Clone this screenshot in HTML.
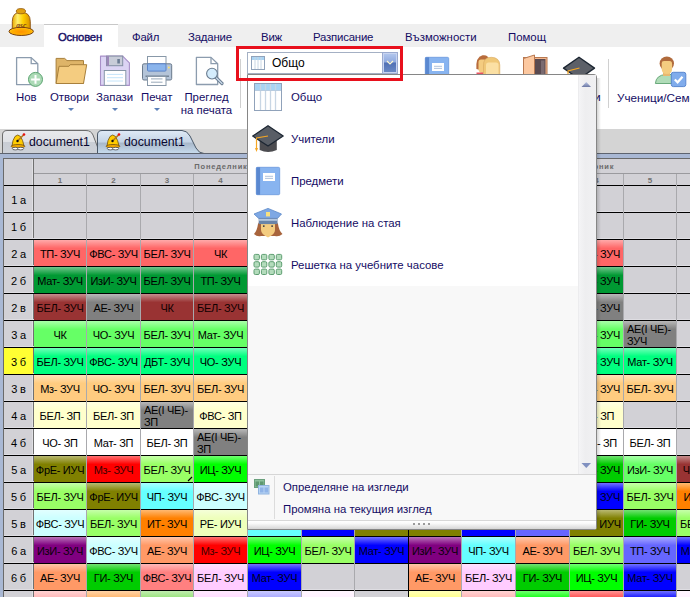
<!DOCTYPE html>
<html><head><meta charset="utf-8">
<style>
*{margin:0;padding:0;box-sizing:border-box}
html,body{width:690px;height:597px;overflow:hidden;background:#fff;font-family:"Liberation Sans",sans-serif;position:relative}
.abs{position:absolute}
#tabband{position:absolute;left:0;top:24px;width:690px;height:23px;background:#efefef}
#acttab{position:absolute;left:44px;top:24px;width:74px;height:24px;background:#fff;border-top:1px solid #c8c8c8}
.tt{position:absolute;top:30px;font-size:11.4px;color:#140c64;white-space:nowrap;line-height:14px;letter-spacing:-.2px}
.rl{position:absolute;font-size:11.4px;color:#140c64;white-space:nowrap;line-height:13px;text-align:center}
.arr{position:absolute;width:0;height:0;border-left:3px solid transparent;border-right:3px solid transparent;border-top:3px solid #5b7fb8}
.sep{position:absolute;width:1px;background:#d0d0d0}
#docarea{position:absolute;left:0;top:129px;width:690px;height:468px;background:#d4d4d4}
#strip{position:absolute;left:0;top:153px;width:690px;height:5px;background:#a9b8d4;border-top:1px solid #5e6470}
#gridbg{position:absolute;left:3px;top:158px;width:687px;height:439px;background:#d2d1d6;border-left:1px solid #6a6a6a;border-top:1px solid #6a6a6a}
#grid{position:absolute;left:0;top:0;width:690px;height:597px}
.hl{position:absolute;left:4px;width:686px;height:1px;background:#000}
.hll{position:absolute;left:4px;width:686px;height:1px;background:#dedde2}
.vl{position:absolute;top:174px;width:1px;height:423px;background:#a9a9ad}
.vb{position:absolute;top:159px;width:1px;height:438px;background:#000}
.lab{position:absolute;left:4px;width:29px;height:26px;font-size:11px;line-height:28px;text-align:center;color:#000;letter-spacing:-.2px}
.c{position:absolute;height:26px;font-size:11px;line-height:28px;text-align:center;white-space:nowrap;overflow:hidden;letter-spacing:-.3px}
.c .w{display:block;text-align:left;line-height:12px;padding:2px 0 0 3px;white-space:normal}
.num{position:absolute;top:175px;height:10px;font-size:8px;line-height:11px;font-weight:bold;color:#707070;text-align:center}
.day{position:absolute;top:161px;height:12px;font-size:7.5px;line-height:12px;font-weight:bold;color:#6a6a6a;text-align:center;letter-spacing:.8px}
#panel{position:absolute;left:247px;top:74px;width:350px;height:456px;background:#fff;border:1px solid #868686;border-radius:0 3px 3px 0}
.it{position:absolute;font-size:11.4px;color:#140c64;white-space:nowrap;line-height:14px}
.dt{position:absolute;top:135px;font-size:12.3px;line-height:15px;color:#0a0830;white-space:nowrap}
</style></head><body>
<div id="tabband"></div>
<div id="acttab"></div>
<!-- bell -->
<svg class="abs" style="left:4px;top:4px" width="36" height="36" viewBox="0 0 36 36">
 <defs><linearGradient id="bg1" x1="0" y1="0" x2="1" y2="0"><stop offset="0" stop-color="#e8a800"/><stop offset=".3" stop-color="#fff070"/><stop offset=".6" stop-color="#ffd000"/><stop offset="1" stop-color="#d89000"/></linearGradient>
 <radialGradient id="bg2" cx=".5" cy=".55" r=".55"><stop offset="0" stop-color="#ff9200"/><stop offset=".7" stop-color="#ffb000"/><stop offset="1" stop-color="#ffd030"/></radialGradient></defs>
 <path d="M8.3 27 L8.3 17.5 Q8.3 8.2 16.9 8.2 Q26.3 8.2 26.3 17.5 L26.3 27 Z" fill="url(#bg1)" stroke="#8a5010" stroke-width=".9"/>
 <ellipse cx="17.2" cy="27.4" rx="12.2" ry="4.1" fill="url(#bg2)" stroke="#7a4010" stroke-width="1"/>
 <ellipse cx="16.9" cy="7.2" rx="4.6" ry="2.6" fill="#e0a010" stroke="#905810" stroke-width=".8"/>
 <text x="17.3" y="24.3" font-size="7.5" text-anchor="middle" fill="#7a3a10" font-family="Liberation Serif" font-weight="bold" font-style="italic">asc</text>
</svg>

<div class="tt" style="left:58px;font-size:11.3px;-webkit-text-stroke:.4px #140c64">Основен</div>
<div class="tt" style="left:132px">Файл</div>
<div class="tt" style="left:188px">Задание</div>
<div class="tt" style="left:261px">Виж</div>
<div class="tt" style="left:313px">Разписание</div>
<div class="tt" style="left:405px;letter-spacing:0">Възможности</div>
<div class="tt" style="left:508px;letter-spacing:0">Помощ</div>

<!-- ribbon -->
<!-- new doc -->
<svg class="abs" style="left:12px;top:52px" width="36" height="38" viewBox="0 0 36 38">
 <path d="M4.6 5.6 L19.2 5.6 L25.8 11.8 L25.8 32.6 L4.6 32.6 Z" fill="#fff" stroke="#8c9cae" stroke-width="1.3" stroke-linejoin="round"/>
 <path d="M19.2 5.6 L19.2 11.6 L25.8 11.6" fill="none" stroke="#8c9cae" stroke-width="1.3"/>
 <circle cx="23.5" cy="27.4" r="7" fill="#acdab6" stroke="#5aa470" stroke-width="1"/>
 <path d="M23.5 23 L23.5 31.8 M19.1 27.4 L27.9 27.4" stroke="#fff" stroke-width="2"/>
</svg>
<!-- folder -->
<svg class="abs" style="left:52px;top:52px" width="40" height="38" viewBox="0 0 40 38">
 <path d="M4.1 6.4 L12.7 6.4 L15 8.6 L31.5 8.6 L31.5 31.5 L4.1 31.5 Z" fill="#deb468" stroke="#a8803c" stroke-width="1"/>
 <path d="M7 14.3 L16.9 14.3 L18.2 12.7 L34.7 12.7 L31.5 31.5 L4.1 31.5 Z" fill="#f4cc80" stroke="#a8803c" stroke-width="1" stroke-linejoin="round"/>
</svg>
<!-- floppy -->
<svg class="abs" style="left:96px;top:52px" width="38" height="38" viewBox="0 0 38 38">
 <path d="M4.5 4.1 L26.7 4.1 L33.4 10.8 L33.4 33.4 L4.5 33.4 Z" fill="#dcd4f4" stroke="#a890c8" stroke-width="1.1" stroke-linejoin="round"/>
 <rect x="10.5" y="4.1" width="16.2" height="9.6" fill="#c8ccd8" stroke="#8490a4" stroke-width="1"/>
 <rect x="10.5" y="4.1" width="2.5" height="9.6" fill="#9c88b8"/>
 <rect x="21.3" y="7" width="2.6" height="4.5" fill="#6c7c94"/>
 <rect x="8.3" y="18.5" width="21.5" height="14.9" fill="#fff" stroke="#8898a8" stroke-width="1"/>
 <g stroke="#c4e4fa" stroke-width="1"><line x1="11" y1="22.4" x2="27" y2="22.4"/><line x1="11" y1="25.7" x2="27" y2="25.7"/><line x1="11" y1="29" x2="27" y2="29"/></g>
</svg>
<!-- printer -->
<svg class="abs" style="left:138px;top:52px" width="38" height="38" viewBox="0 0 38 38">
 <rect x="9.5" y="4.5" width="18.5" height="8" fill="#fff" stroke="#8898a8" stroke-width="1"/>
 <rect x="4.5" y="11.8" width="29.2" height="16.2" rx="1.5" fill="#b4c4d8" stroke="#6a7a8c" stroke-width="1"/>
 <rect x="9.5" y="11.8" width="18.5" height="7.3" rx="1" fill="#8ab4ec" stroke="#5a84c8" stroke-width="1"/>
 <circle cx="30.9" cy="15.6" r="1" fill="#f8e070"/>
 <line x1="7.5" y1="24.2" x2="31" y2="24.2" stroke="#6a7a8c" stroke-width="1.3"/>
 <rect x="9.5" y="24.5" width="18.5" height="9" fill="#fff" stroke="#8898a8" stroke-width="1"/>
 <g stroke="#98a8b8" stroke-width="1"><line x1="13" y1="26.9" x2="24.5" y2="26.9"/><line x1="13" y1="30.2" x2="24.5" y2="30.2"/></g>
</svg>
<!-- preview -->
<svg class="abs" style="left:190px;top:52px" width="38" height="38" viewBox="0 0 38 38">
 <path d="M6.4 5.4 L21 5.4 L27.7 11.8 L27.7 32.5 L6.4 32.5 Z" fill="#fff" stroke="#8c9cae" stroke-width="1.3" stroke-linejoin="round"/>
 <path d="M21 5.4 L21 11.6 L27.7 11.6" fill="none" stroke="#8c9cae" stroke-width="1.3"/>
 <path d="M25.5 25 L32 31.5" stroke="#6a7c90" stroke-width="3.2" stroke-linecap="round"/>
 <path d="M25.5 25 L32 31.5" stroke="#c8d8e8" stroke-width="1.4" stroke-linecap="round"/>
 <circle cx="22" cy="21.6" r="5.4" fill="#d4ecfc" stroke="#6a7c90" stroke-width="1.1"/>
</svg>
<!-- right ribbon icons (partially hidden) -->
<svg class="abs" style="left:424px;top:56px" width="26" height="20" viewBox="0 0 26 20">
 <rect x="1.3" y="1.3" width="23.4" height="24" rx="1.3" fill="#88b4f0" stroke="#6a98dc" stroke-width=".8"/>
 <rect x="1.3" y="1.3" width="3.8" height="24" fill="#5a88d0"/>
 <rect x="8" y="7" width="12" height="8" fill="#fff"/>
 <g stroke="#a8bcd8" stroke-width=".9"><line x1="10" y1="10.3" x2="18" y2="10.3"/><line x1="10" y1="12.4" x2="18" y2="12.4"/></g>
</svg>
<svg class="abs" style="left:474px;top:54px" width="30" height="22" viewBox="0 0 30 22">
 <path d="M2.4 15 Q1.5 3 8.5 1.3 Q14.5 0.5 15 6 L14.6 16 Q8 17 2.4 15Z" fill="#b86c3c"/>
 <path d="M4.5 8 Q4.5 5.5 7 5.5 L10 5.5 Q12.5 5.5 12.5 8 L12.5 15 Q12.5 19 8.5 19 Q4.5 19 4.5 15Z" fill="#f4cc80"/>
 <rect x="2.5" y="18.5" width="7" height="3.5" fill="#e85060"/>
 <path d="M9.5 12 Q9 3 17.5 3.3 Q25.5 3.6 25.8 11 L25.8 22 L9.5 22Z" fill="#f0c878" stroke="#d8a860" stroke-width=".6"/>
 <path d="M12 11 Q12 8.5 14.5 8.5 L22 8.5 Q24.5 8.5 24.5 11 L24.5 22 L12 22Z" fill="#fbe0a4"/>
</svg>
<svg class="abs" style="left:522px;top:54px" width="27" height="22" viewBox="0 0 27 22">
 <rect x="1.5" y="3.5" width="23.5" height="20" fill="#f4b890" stroke="#b87850" stroke-width="1"/>
 <rect x="12" y="5" width="11.5" height="18" fill="#5a4a50"/>
 <rect x="19" y="6.5" width="3.5" height="16" fill="#7a6a70"/>
 <path d="M1.5 4.5 L12.5 1 L12.5 22 L1.5 22Z" fill="#fcc8a0" stroke="#b87850" stroke-width="1" stroke-linejoin="round"/>
</svg>
<svg class="abs" style="left:562px;top:55px" width="34" height="21" viewBox="0 0 34 21">
 <path d="M1.5 13.1 L17 2.2 L32.5 13.1 L17 24Z" fill="#5c6068" stroke="#1c2632" stroke-width="1.3" stroke-linejoin="round"/>
 <path d="M17.5 13 L6 16 L6 21" fill="none" stroke="#f5a623" stroke-width="1.2"/>
</svg>
<!-- user w/ check -->
<svg class="abs" style="left:650px;top:52px" width="40" height="40" viewBox="0 0 40 40">
 <path d="M5.4 31.5 Q6 23 16 22.5 L22 22.5 L22 31.5 Z" fill="#b0dcb8" stroke="#6aaa7c" stroke-width="1"/>
 <rect x="13" y="19" width="7" height="5" fill="#e8b870"/>
 <ellipse cx="16.8" cy="11.5" rx="7.2" ry="7" fill="#b06a3c"/>
 <path d="M11.7 11 Q11.7 9 14 9 L19.5 9 Q22.1 9 22.1 12 L22.1 17 Q22.1 22 16.9 22 Q11.7 22 11.7 17Z" fill="#f4cc80"/>
 <rect x="21.3" y="20.3" width="14.5" height="14.3" rx="2" fill="#80acec" stroke="#5a88d0" stroke-width="1"/>
 <path d="M24.8 27.5 L27.6 30.3 L32.5 24.8" fill="none" stroke="#fff" stroke-width="2.2"/>
</svg>
<!-- tab row small bell in doc tabs -->

<div class="rl" style="left:16px;top:91px">Нов</div>
<div class="rl" style="left:50px;top:91px">Отвори</div>
<div class="arr" style="left:68px;top:108px"></div>
<div class="rl" style="left:96px;top:91px">Запази</div>
<div class="arr" style="left:112px;top:108px"></div>
<div class="rl" style="left:141px;top:91px">Печат</div>
<div class="arr" style="left:154px;top:108px"></div>
<div class="rl" style="left:180px;top:91px;width:53px">Преглед<br>на печата</div>
<div class="sep" style="left:240px;top:59px;height:49px"></div>
<div class="sep" style="left:608px;top:59px;height:49px"></div>
<div class="rl" style="left:557px;top:91px">Учители</div>
<div class="rl" style="left:617px;top:91px;font-size:11.7px">Ученици/Семейства</div>

<!-- combo -->
<div class="abs" style="left:236px;top:46px;width:167px;height:35px;border:3px solid #e8101c;z-index:10"></div>
<div class="abs" style="left:247px;top:52px;width:151px;height:22px;border:1px solid #a4b0c4;background:#fff"></div>
<div class="abs" style="left:382px;top:52px;width:16px;height:22px;border:1px solid #9aaad0;box-shadow:inset 0 0 0 1px #c8d4f0;background:linear-gradient(#b4c8ee,#90aadf 45%,#5070b4 50%,#6c8ac6)"></div>
<svg class="abs" style="left:251px;top:56px" width="14" height="14" viewBox="0 0 14 14"><rect x=".5" y=".5" width="13" height="13" fill="#fff" stroke="#90a2ba"/><rect x="1" y="1" width="12" height="3" fill="#a8d4f4"/><g stroke="#c8d6e4"><line x1="4" y1="1" x2="4" y2="13"/><line x1="7" y1="1" x2="7" y2="13"/><line x1="10" y1="1" x2="10" y2="13"/></g></svg>
<div class="abs" style="left:272px;top:56px;font-size:12px;line-height:14px;color:#000">Общо</div>
<svg class="abs" style="left:386px;top:60px" width="8" height="6"><path d="M1 1 L4 4 L7 1" fill="none" stroke="#fff8d0" stroke-width="1.2"/></svg>

<!-- doc tabs area -->
<div id="docarea"></div>
<svg class="abs" style="left:0;top:129px" width="250" height="26" viewBox="0 0 250 26">
 <defs>
  <linearGradient id="t1" x1="0" y1="0" x2="0" y2="1"><stop offset="0" stop-color="#e8e9ec"/><stop offset=".5" stop-color="#dfe1e5"/><stop offset=".52" stop-color="#c9cdd4"/><stop offset="1" stop-color="#cdd1d8"/></linearGradient>
  <linearGradient id="t2" x1="0" y1="0" x2="0" y2="1"><stop offset="0" stop-color="#dfeaf6"/><stop offset=".5" stop-color="#c4d4e6"/><stop offset=".55" stop-color="#a8b8ca"/><stop offset="1" stop-color="#c8dcee"/></linearGradient>
 </defs>
 <path d="M2.5 24.5 L2.5 6 Q2.5 1.5 7 1.5 L86 1.5 Q91 1.5 93 6 L100 24.5Z" fill="url(#t1)" stroke="#6c6c6c" stroke-width="1"/>
 <path d="M97.5 24.5 L97.5 6 Q97.5 1.5 102 1.5 L182 1.5 Q187 1.5 190 7 L196 19 Q199 24.5 204 24.5Z" fill="url(#t2)" stroke="#4a5868" stroke-width="1"/>
</svg>
<div class="dt" style="left:29px">document1</div>
<div class="dt" style="left:124px">document1</div>
<div id="strip"></div>
<div class="abs" style="left:0;top:154px;width:3px;height:443px;background:#a9b8d4"></div>
<!-- small bells -->
<svg class="abs" style="left:9px;top:132px" width="18" height="19" viewBox="0 0 18 19">
 <path d="M3 14 Q3.5 8 6 4.5 Q8.7 1.5 11.5 4.5 Q14 8 15 14Z" fill="#ffcc00" stroke="#705010" stroke-width=".8"/>
 <ellipse cx="9" cy="14.3" rx="6.8" ry="1.8" fill="#f0a800" stroke="#604010" stroke-width=".7"/>
 <ellipse cx="6.3" cy="16.6" rx="3" ry="1.3" fill="#fff" stroke="#303030" stroke-width=".7"/>
 <ellipse cx="11.7" cy="16.6" rx="3" ry="1.3" fill="#fff" stroke="#303030" stroke-width=".7"/>
 <path d="M8.5 9 L14.5 3" stroke="#b07a20" stroke-width="1.6"/>
 <circle cx="8.5" cy="9" r="1.2" fill="#101010"/>
 <circle cx="15" cy="2.5" r="1.3" fill="#e81010"/>
</svg>
<svg class="abs" style="left:104px;top:132px" width="18" height="19" viewBox="0 0 18 19">
 <path d="M3 14 Q3.5 8 6 4.5 Q8.7 1.5 11.5 4.5 Q14 8 15 14Z" fill="#ffcc00" stroke="#705010" stroke-width=".8"/>
 <ellipse cx="9" cy="14.3" rx="6.8" ry="1.8" fill="#f0a800" stroke="#604010" stroke-width=".7"/>
 <ellipse cx="6.3" cy="16.6" rx="3" ry="1.3" fill="#fff" stroke="#303030" stroke-width=".7"/>
 <ellipse cx="11.7" cy="16.6" rx="3" ry="1.3" fill="#fff" stroke="#303030" stroke-width=".7"/>
 <path d="M8.5 9 L14.5 3" stroke="#b07a20" stroke-width="1.6"/>
 <circle cx="8.5" cy="9" r="1.2" fill="#101010"/>
 <circle cx="15" cy="2.5" r="1.3" fill="#e81010"/>
</svg>
<div id="gridbg"></div>
<div id="grid">
<div class="day" style="left:34px;width:374px">Понеделник</div>
<div class="day" style="left:409px;width:374px">Вторник</div>
<div class="abs" style="left:34px;top:173px;width:656px;height:1px;background:#9a9a9e"></div>
<div class="abs" style="left:32px;top:159px;width:1px;height:438px;background:#e0e0e4"></div>
<div class="abs" style="left:33px;top:159px;width:1px;height:438px;background:#707070"></div>
<div class="hl" style="top:185px"></div>
<div class="hl" style="top:212px"></div>
<div class="hll" style="top:211px"></div>
<div class="hl" style="top:239px"></div>
<div class="hll" style="top:238px"></div>
<div class="hl" style="top:266px"></div>
<div class="hll" style="top:265px"></div>
<div class="hl" style="top:293px"></div>
<div class="hll" style="top:292px"></div>
<div class="hl" style="top:320px"></div>
<div class="hll" style="top:319px"></div>
<div class="hl" style="top:347px"></div>
<div class="hll" style="top:346px"></div>
<div class="hl" style="top:374px"></div>
<div class="hll" style="top:373px"></div>
<div class="hl" style="top:401px"></div>
<div class="hll" style="top:400px"></div>
<div class="hl" style="top:428px"></div>
<div class="hll" style="top:427px"></div>
<div class="hl" style="top:455px"></div>
<div class="hll" style="top:454px"></div>
<div class="hl" style="top:482px"></div>
<div class="hll" style="top:481px"></div>
<div class="hl" style="top:509px"></div>
<div class="hll" style="top:508px"></div>
<div class="hl" style="top:536px"></div>
<div class="hll" style="top:535px"></div>
<div class="hl" style="top:563px"></div>
<div class="hll" style="top:562px"></div>
<div class="hl" style="top:590px"></div>
<div class="hll" style="top:589px"></div>
<div class="vl" style="left:86px"></div>
<div class="vl" style="left:140px"></div>
<div class="vl" style="left:193px"></div>
<div class="vl" style="left:247px"></div>
<div class="vl" style="left:301px"></div>
<div class="vl" style="left:354px"></div>
<div class="vb" style="left:408px"></div>
<div class="vl" style="left:461px"></div>
<div class="vl" style="left:515px"></div>
<div class="vl" style="left:569px"></div>
<div class="vl" style="left:623px"></div>
<div class="vl" style="left:676px"></div>
<div class="lab" style="top:186px">1 а</div>
<div class="lab" style="top:213px">1 б</div>
<div class="lab" style="top:240px">2 а</div>
<div class="c" style="left:34px;top:240px;width:52px;background:linear-gradient(#ffaaaa,#ff6666 32%);color:#000">ТП- ЗУЧ</div>
<div class="c" style="left:87px;top:240px;width:53px;background:linear-gradient(#ffaaaa,#ff6666 32%);color:#000">ФВС- ЗУЧ</div>
<div class="c" style="left:141px;top:240px;width:52px;background:linear-gradient(#ffaaaa,#ff6666 32%);color:#000">БЕЛ- ЗУЧ</div>
<div class="c" style="left:194px;top:240px;width:53px;background:linear-gradient(#ffaaaa,#ff6666 32%);color:#000">ЧК</div>
<div class="c" style="left:570px;top:240px;width:53px;background:linear-gradient(#ffaaaa,#ff6666 32%);color:#000">БЕЛ- ЗУЧ</div>
<div class="lab" style="top:267px">2 б</div>
<div class="c" style="left:34px;top:267px;width:52px;background:linear-gradient(#72c68e,#009933 32%);color:#000">Мат- ЗУЧ</div>
<div class="c" style="left:87px;top:267px;width:53px;background:linear-gradient(#72c68e,#009933 32%);color:#000">ИзИ- ЗУЧ</div>
<div class="c" style="left:141px;top:267px;width:52px;background:linear-gradient(#72c68e,#009933 32%);color:#000">БЕЛ- ЗУЧ</div>
<div class="c" style="left:194px;top:267px;width:53px;background:linear-gradient(#72c68e,#009933 32%);color:#000">ТП- ЗУЧ</div>
<div class="c" style="left:570px;top:267px;width:53px;background:linear-gradient(#72c68e,#009933 32%);color:#000">БЕЛ- ЗУЧ</div>
<div class="lab" style="top:294px">2 в</div>
<div class="c" style="left:34px;top:294px;width:52px;background:linear-gradient(#c68e8e,#993333 32%);color:#100000">БЕЛ- ЗУЧ</div>
<div class="c" style="left:87px;top:294px;width:53px;background:linear-gradient(#b9b9b9,#808080 32%);color:#000">АЕ- ЗУЧ</div>
<div class="c" style="left:141px;top:294px;width:52px;background:linear-gradient(#c68e8e,#993333 32%);color:#100000">ЧК</div>
<div class="c" style="left:194px;top:294px;width:53px;background:linear-gradient(#c68e8e,#993333 32%);color:#100000">БЕЛ- ЗУЧ</div>
<div class="c" style="left:570px;top:294px;width:53px;background:linear-gradient(#b9b9b9,#808080 32%);color:#000">БЕЛ- ЗУЧ</div>
<div class="lab" style="top:321px">3 а</div>
<div class="c" style="left:34px;top:321px;width:52px;background:linear-gradient(#aaffaa,#66ff66 32%);color:#000">ЧК</div>
<div class="c" style="left:87px;top:321px;width:53px;background:linear-gradient(#aaffaa,#66ff66 32%);color:#000">ЧО- ЗУЧ</div>
<div class="c" style="left:141px;top:321px;width:52px;background:linear-gradient(#aaffaa,#66ff66 32%);color:#000">БЕЛ- ЗУЧ</div>
<div class="c" style="left:194px;top:321px;width:53px;background:linear-gradient(#aaffaa,#66ff66 32%);color:#000">Мат- ЗУЧ</div>
<div class="c" style="left:570px;top:321px;width:53px;background:linear-gradient(#aaffaa,#66ff66 32%);color:#000">БЕЛ- ЗУЧ</div>
<div class="c" style="left:624px;top:321px;width:52px;background:linear-gradient(#b9b9b9,#808080 32%);color:#000"><span class="w">АЕ(І ЧЕ)-<br>ЗУЧ</span></div>
<div class="lab" style="top:348px;background:#ffff33">3 б</div>
<div class="c" style="left:34px;top:348px;width:52px;background:linear-gradient(#72ffb9,#00ff80 32%);color:#000">БЕЛ- ЗУЧ</div>
<div class="c" style="left:87px;top:348px;width:53px;background:linear-gradient(#72ffb9,#00ff80 32%);color:#000">ФВС- ЗУЧ</div>
<div class="c" style="left:141px;top:348px;width:52px;background:linear-gradient(#72ffb9,#00ff80 32%);color:#000">ДБТ- ЗУЧ</div>
<div class="c" style="left:194px;top:348px;width:53px;background:linear-gradient(#72ffb9,#00ff80 32%);color:#000">ЧО- ЗУЧ</div>
<div class="c" style="left:570px;top:348px;width:53px;background:linear-gradient(#72ffb9,#00ff80 32%);color:#000">БЕЛ- ЗУЧ</div>
<div class="c" style="left:624px;top:348px;width:52px;background:linear-gradient(#72ffb9,#00ff80 32%);color:#000">Мат- ЗУЧ</div>
<div class="lab" style="top:375px">3 в</div>
<div class="c" style="left:34px;top:375px;width:52px;background:linear-gradient(#ffe2b9,#ffcc80 32%);color:#000">Мз- ЗУЧ</div>
<div class="c" style="left:87px;top:375px;width:53px;background:linear-gradient(#ffe2b9,#ffcc80 32%);color:#000">ЧО- ЗУЧ</div>
<div class="c" style="left:141px;top:375px;width:52px;background:linear-gradient(#ffe2b9,#ffcc80 32%);color:#000">БЕЛ- ЗУЧ</div>
<div class="c" style="left:194px;top:375px;width:53px;background:linear-gradient(#ffe2b9,#ffcc80 32%);color:#000">БЕЛ- ЗУЧ</div>
<div class="c" style="left:570px;top:375px;width:53px;background:linear-gradient(#ffe2b9,#ffcc80 32%);color:#000">БЕЛ- ЗУЧ</div>
<div class="c" style="left:624px;top:375px;width:52px;background:linear-gradient(#ffe2b9,#ffcc80 32%);color:#000">БЕЛ- ЗУЧ</div>
<div class="lab" style="top:402px">4 а</div>
<div class="c" style="left:34px;top:402px;width:52px;background:linear-gradient(#ffffe2,#ffffcc 32%);color:#000">БЕЛ- ЗП</div>
<div class="c" style="left:87px;top:402px;width:53px;background:linear-gradient(#ffffe2,#ffffcc 32%);color:#000">БЕЛ- ЗП</div>
<div class="c" style="left:141px;top:402px;width:52px;background:linear-gradient(#b9b9b9,#808080 32%);color:#000"><span class="w">АЕ(І ЧЕ)-<br>ЗП</span></div>
<div class="c" style="left:194px;top:402px;width:53px;background:linear-gradient(#ffffe2,#ffffcc 32%);color:#000">ФВС- ЗП</div>
<div class="c" style="left:570px;top:402px;width:53px;background:linear-gradient(#ffffe2,#ffffcc 32%);color:#000">ЧО- ЗП</div>
<div class="lab" style="top:429px">4 б</div>
<div class="c" style="left:34px;top:429px;width:52px;background:linear-gradient(#ffffff,#ffffff 32%);color:#000">ЧО- ЗП</div>
<div class="c" style="left:87px;top:429px;width:53px;background:linear-gradient(#ffffff,#ffffff 32%);color:#000">Мат- ЗП</div>
<div class="c" style="left:141px;top:429px;width:52px;background:linear-gradient(#ffffff,#ffffff 32%);color:#000">БЕЛ- ЗП</div>
<div class="c" style="left:194px;top:429px;width:53px;background:linear-gradient(#b9b9b9,#808080 32%);color:#000"><span class="w">АЕ(І ЧЕ)-<br>ЗП</span></div>
<div class="c" style="left:570px;top:429px;width:53px;background:linear-gradient(#ffffff,#ffffff 32%);color:#000">БЕЛ- ЗП</div>
<div class="c" style="left:624px;top:429px;width:52px;background:linear-gradient(#ffffff,#ffffff 32%);color:#000">БЕЛ- ЗП</div>
<div class="lab" style="top:456px">5 а</div>
<div class="c" style="left:34px;top:456px;width:52px;background:linear-gradient(#b9b972,#808000 32%);color:#000">ФрЕ- ИУЧ</div>
<div class="c" style="left:87px;top:456px;width:53px;background:linear-gradient(#ff7272,#ff0000 32%);color:#400000">Мз- ЗУЧ</div>
<div class="c" style="left:141px;top:456px;width:52px;background:linear-gradient(#c6ffaa,#99ff66 32%);color:#000">БЕЛ- ЗУЧ</div>
<div class="c" style="left:194px;top:456px;width:53px;background:linear-gradient(#72ff72,#00ff00 32%);color:#000">ИЦ- ЗУЧ</div>
<div class="c" style="left:570px;top:456px;width:53px;background:linear-gradient(#72e272,#00cc00 32%);color:#000">БЕЛ- ЗУЧ</div>
<div class="c" style="left:624px;top:456px;width:52px;background:linear-gradient(#aaffaa,#66ff66 32%);color:#000">ИзИ- ЗУЧ</div>
<div class="c" style="left:677px;top:456px;width:53px;background:linear-gradient(#c68e8e,#993333 32%);color:#100000">ЧО- ЗУЧ</div>
<div class="lab" style="top:483px">5 б</div>
<div class="c" style="left:34px;top:483px;width:52px;background:linear-gradient(#c6ffaa,#99ff66 32%);color:#000">БЕЛ- ЗУЧ</div>
<div class="c" style="left:87px;top:483px;width:53px;background:linear-gradient(#b9b972,#808000 32%);color:#000">ФрЕ- ИУЧ</div>
<div class="c" style="left:141px;top:483px;width:52px;background:linear-gradient(#aaffff,#66ffff 32%);color:#000">ЧП- ЗУЧ</div>
<div class="c" style="left:194px;top:483px;width:53px;background:linear-gradient(#e2ffff,#ccffff 32%);color:#000">ФВС- ЗУЧ</div>
<div class="c" style="left:570px;top:483px;width:53px;background:linear-gradient(#7272ff,#0000ff 32%);color:#000020">БЕЛ- ЗУЧ</div>
<div class="c" style="left:624px;top:483px;width:52px;background:linear-gradient(#c6ffaa,#99ff66 32%);color:#000">БЕЛ- ЗУЧ</div>
<div class="c" style="left:677px;top:483px;width:53px;background:linear-gradient(#ffb972,#ff8000 32%);color:#000">ИТ- ЗУЧ</div>
<div class="lab" style="top:510px">5 в</div>
<div class="c" style="left:34px;top:510px;width:52px;background:linear-gradient(#e2ffff,#ccffff 32%);color:#000">ФВС- ЗУЧ</div>
<div class="c" style="left:87px;top:510px;width:53px;background:linear-gradient(#c6ffaa,#99ff66 32%);color:#000">БЕЛ- ЗУЧ</div>
<div class="c" style="left:141px;top:510px;width:52px;background:linear-gradient(#ffb972,#ff8000 32%);color:#000">ИТ- ЗУЧ</div>
<div class="c" style="left:194px;top:510px;width:53px;background:linear-gradient(#f5ffd9,#eeffbb 32%);color:#000">РЕ- ИУЧ</div>
<div class="c" style="left:248px;top:510px;width:53px;background:linear-gradient(#aaffff,#66ffff 32%);color:#000"></div>
<div class="c" style="left:302px;top:510px;width:52px;background:linear-gradient(#7272ff,#0000ff 32%);color:#000020"></div>
<div class="c" style="left:355px;top:510px;width:53px;background:linear-gradient(#b9b972,#808000 32%);color:#000"></div>
<div class="c" style="left:409px;top:510px;width:52px;background:linear-gradient(#b9b972,#808000 32%);color:#000"></div>
<div class="c" style="left:462px;top:510px;width:53px;background:linear-gradient(#7272ff,#0000ff 32%);color:#000020"></div>
<div class="c" style="left:516px;top:510px;width:53px;background:linear-gradient(#aaaaff,#6666ff 32%);color:#000"></div>
<div class="c" style="left:570px;top:510px;width:53px;background:linear-gradient(#b9b972,#808000 32%);color:#000">ФрЕ- ИУЧ</div>
<div class="c" style="left:624px;top:510px;width:52px;background:linear-gradient(#72e272,#00cc00 32%);color:#000">ГИ- ЗУЧ</div>
<div class="c" style="left:677px;top:510px;width:53px;background:linear-gradient(#c6ffaa,#99ff66 32%);color:#000">БЕЛ- ЗУЧ</div>
<div class="lab" style="top:537px">6 а</div>
<div class="c" style="left:34px;top:537px;width:52px;background:linear-gradient(#b972b9,#800080 32%);color:#0a000a">ИзИ- ЗУЧ</div>
<div class="c" style="left:87px;top:537px;width:53px;background:linear-gradient(#e2ffff,#ccffff 32%);color:#000">ФВС- ЗУЧ</div>
<div class="c" style="left:141px;top:537px;width:52px;background:linear-gradient(#ffc6aa,#ff9966 32%);color:#000">АЕ- ЗУЧ</div>
<div class="c" style="left:194px;top:537px;width:53px;background:linear-gradient(#ff7272,#ff0000 32%);color:#400000">Мз- ЗУЧ</div>
<div class="c" style="left:248px;top:537px;width:53px;background:linear-gradient(#72ff72,#00ff00 32%);color:#000">ИЦ- ЗУЧ</div>
<div class="c" style="left:302px;top:537px;width:52px;background:linear-gradient(#c6ffaa,#99ff66 32%);color:#000">БЕЛ- ЗУЧ</div>
<div class="c" style="left:355px;top:537px;width:53px;background:linear-gradient(#7272ff,#0000ff 32%);color:#000020">Мат- ЗУЧ</div>
<div class="c" style="left:409px;top:537px;width:52px;background:linear-gradient(#b972b9,#800080 32%);color:#0a000a">ИзИ- ЗУЧ</div>
<div class="c" style="left:462px;top:537px;width:53px;background:linear-gradient(#aaffff,#66ffff 32%);color:#000">ЧП- ЗУЧ</div>
<div class="c" style="left:516px;top:537px;width:53px;background:linear-gradient(#ffc6aa,#ff9966 32%);color:#000">АЕ- ЗУЧ</div>
<div class="c" style="left:570px;top:537px;width:53px;background:linear-gradient(#c6ffaa,#99ff66 32%);color:#000">БЕЛ- ЗУЧ</div>
<div class="c" style="left:624px;top:537px;width:52px;background:linear-gradient(#aaaaff,#6666ff 32%);color:#000">ТП- ЗУЧ</div>
<div class="c" style="left:677px;top:537px;width:53px;background:linear-gradient(#7272ff,#0000ff 32%);color:#000020">Мат- ЗУЧ</div>
<div class="lab" style="top:564px">6 б</div>
<div class="c" style="left:34px;top:564px;width:52px;background:linear-gradient(#ffc6aa,#ff9966 32%);color:#000">АЕ- ЗУЧ</div>
<div class="c" style="left:87px;top:564px;width:53px;background:linear-gradient(#72e272,#00cc00 32%);color:#000">ГИ- ЗУЧ</div>
<div class="c" style="left:141px;top:564px;width:52px;background:linear-gradient(#ffb9b9,#ff8080 32%);color:#000">ФВС- ЗУЧ</div>
<div class="c" style="left:194px;top:564px;width:53px;background:linear-gradient(#ffe2ff,#ffccff 32%);color:#000">БЕЛ- ЗУЧ</div>
<div class="c" style="left:248px;top:564px;width:53px;background:linear-gradient(#7272ff,#0000ff 32%);color:#000020">Мат- ЗУЧ</div>
<div class="c" style="left:409px;top:564px;width:52px;background:linear-gradient(#ffc6aa,#ff9966 32%);color:#000">АЕ- ЗУЧ</div>
<div class="c" style="left:462px;top:564px;width:53px;background:linear-gradient(#ffe2ff,#ffccff 32%);color:#000">БЕЛ- ЗУЧ</div>
<div class="c" style="left:516px;top:564px;width:53px;background:linear-gradient(#72e272,#00cc00 32%);color:#000">ГИ- ЗУЧ</div>
<div class="c" style="left:570px;top:564px;width:53px;background:linear-gradient(#72ff72,#00ff00 32%);color:#000">ИЦ- ЗУЧ</div>
<div class="c" style="left:624px;top:564px;width:52px;background:linear-gradient(#7272ff,#0000ff 32%);color:#000020">Мат- ЗУЧ</div>
<div class="lab" style="top:591px">7 а</div>
<div class="c" style="left:34px;top:591px;width:52px;background:linear-gradient(#ffd3d3,#ffb0b0 32%);color:#000"></div>
<div class="c" style="left:87px;top:591px;width:53px;background:linear-gradient(#ffd3a7,#ffb060 32%);color:#000"></div>
<div class="c" style="left:141px;top:591px;width:52px;background:linear-gradient(#c1edb0,#90e070 32%);color:#000"></div>
<div class="c" style="left:194px;top:591px;width:53px;background:linear-gradient(#ffe9ff,#ffd8ff 32%);color:#000"></div>
<div class="c" style="left:248px;top:591px;width:53px;background:linear-gradient(#cacaff,#a0a0ff 32%);color:#000"></div>
<div class="c" style="left:302px;top:591px;width:52px;background:linear-gradient(#fff6ff,#fff0ff 32%);color:#000"></div>
<div class="c" style="left:409px;top:591px;width:52px;background:linear-gradient(#ffffb9,#ffff80 32%);color:#000"></div>
<div class="c" style="left:462px;top:591px;width:53px;background:linear-gradient(#ffd3d3,#ffb0b0 32%);color:#000"></div>
<div class="c" style="left:516px;top:591px;width:53px;background:linear-gradient(#72ff72,#00ff00 32%);color:#000"></div>
<div class="c" style="left:570px;top:591px;width:53px;background:linear-gradient(#ff9595,#ff4040 32%);color:#000"></div>
<div class="c" style="left:624px;top:591px;width:52px;background:linear-gradient(#7272ff,#0000ff 32%);color:#000020"></div>
<div class="c" style="left:677px;top:591px;width:53px;background:linear-gradient(#fff6ff,#fff0ff 32%);color:#000"></div>
<div class="num" style="left:34px;width:52px">1</div>
<div class="num" style="left:87px;width:53px">2</div>
<div class="num" style="left:141px;width:52px">3</div>
<div class="num" style="left:194px;width:53px">4</div>
<div class="num" style="left:248px;width:53px">5</div>
<div class="num" style="left:302px;width:52px">6</div>
<div class="num" style="left:355px;width:53px">7</div>
<div class="num" style="left:409px;width:52px">1</div>
<div class="num" style="left:462px;width:53px">2</div>
<div class="num" style="left:516px;width:53px">3</div>
<div class="num" style="left:570px;width:53px">4</div>
<div class="num" style="left:624px;width:52px">5</div>
<div class="num" style="left:677px;width:53px">6</div>
<svg class="abs" style="left:187px;top:476px" width="6" height="6"><path d="M1 5 L5 1" stroke="#000" stroke-width="1.1"/></svg>
</div>
<div id="pshadow" class="abs" style="left:597px;top:78px;width:4px;height:452px;background:linear-gradient(90deg,rgba(0,0,0,.16),rgba(0,0,0,0))"></div>
<div id="panel"></div>
<div class="abs" style="left:248px;top:75px;width:330px;height:211px;background:#fff"></div>
<div class="abs" style="left:248px;top:286px;width:330px;height:188px;background:#f8f8f8"></div>
<div class="abs" style="left:578px;top:75px;width:18px;height:399px;background:linear-gradient(90deg,#e4e4e6,#f4f4f6 1px,#eeeef0 40%,#f0f0f2);"></div>
<svg class="abs" style="left:581px;top:81px" width="11" height="7"><defs><linearGradient id="ag" x1="0" y1="0" x2="0" y2="1"><stop offset="0" stop-color="#b8c4e4"/><stop offset="1" stop-color="#6c78a4"/></linearGradient></defs><path d="M0.5 6 L5.3 1 L10 6Z" fill="url(#ag)"/></svg>
<svg class="abs" style="left:581px;top:462px" width="11" height="7"><path d="M0.5 1 L5.3 6 L10 1Z" fill="#8090c0"/></svg>
<div class="abs" style="left:248px;top:474px;width:348px;height:1px;background:#d6d6d6"></div>
<div class="abs" style="left:248px;top:475px;width:348px;height:45px;background:#f8f8f8"></div>
<div class="abs" style="left:274px;top:476px;width:1px;height:43px;background:#dcdcdc"></div>
<div class="abs" style="left:248px;top:520px;width:348px;height:9px;background:linear-gradient(#ffffff,#fafafa 30%,#d6d6d6);border-top:1px solid #d8d8d8"></div>
<div class="abs" style="left:413px;top:523px;width:2px;height:2px;background:#9a9a9a;box-shadow:5px 0 #9a9a9a,10px 0 #9a9a9a,15px 0 #9a9a9a"></div>
<!-- table icon -->
<svg class="abs" style="left:254px;top:83px" width="28" height="28" viewBox="0 0 28 28">
 <rect x=".5" y=".5" width="27" height="27" fill="#fff" stroke="#90a2ba"/>
 <rect x="1" y="1" width="26" height="6" fill="#a8d4f4"/>
 <g stroke="#c8d6e4" stroke-width="1.3"><line x1="6.5" y1="1" x2="6.5" y2="27"/><line x1="11.5" y1="1" x2="11.5" y2="27"/><line x1="16.5" y1="1" x2="16.5" y2="27"/><line x1="21.5" y1="1" x2="21.5" y2="27"/></g>
 <line x1="1" y1="7.5" x2="27" y2="7.5" stroke="#b8cce0"/>
</svg>
<div class="it" style="top:90px;left:291px">Общо</div>
<!-- grad cap -->
<svg class="abs" style="left:250px;top:120px" width="40" height="40" viewBox="0 0 40 40">
 <path d="M9.7 19 L26.8 19 L26.8 30 Q18 34 9.7 30Z" fill="#4c4c50"/>
 <path d="M2.7 16.1 L18 5.7 L33.2 16.1 L18 26.1Z" fill="#595e66" stroke="#1c2632" stroke-width="1.2" stroke-linejoin="round"/>
 <path d="M18 16 L6.5 18 L6.5 30" fill="none" stroke="#f5a623" stroke-width="1.2"/>
 <path d="M5 28 L6.5 32 L8 28Z" fill="#f5a623"/>
</svg>
<div class="it" style="top:132px;left:291px">Учители</div>
<!-- book -->
<svg class="abs" style="left:250px;top:162px" width="40" height="40" viewBox="0 0 40 40">
 <rect x="6.3" y="5.3" width="23.4" height="27.4" rx="1.3" fill="#88b4f0" stroke="#6a98dc" stroke-width=".8"/>
 <rect x="6.3" y="5.3" width="3.8" height="27.4" fill="#5a88d0"/>
 <rect x="13" y="11" width="12" height="8" fill="#fff"/>
 <g stroke="#a8bcd8" stroke-width=".9"><line x1="15" y1="14.3" x2="23" y2="14.3"/><line x1="15" y1="16.4" x2="23" y2="16.4"/></g>
</svg>
<div class="it" style="top:174px;left:291px">Предмети</div>
<!-- police woman -->
<svg class="abs" style="left:250px;top:204px" width="40" height="40" viewBox="0 0 40 40">
 <path d="M4 30 Q7 27 8 20 Q9 16 18 16 Q27 16 28 20 Q29 27 32.5 30 Q29 33 25 32 L11 32 Q7 33 4 30Z" fill="#a8643c"/>
 <path d="M11 19 L25 19 L25 26 Q25 30 18 33.5 Q11 30 11 26Z" fill="#f4cc80"/>
 <circle cx="13.8" cy="22.1" r=".9" fill="#2a3040"/><circle cx="22.1" cy="22.1" r=".9" fill="#2a3040"/>
 <path d="M4 10 L18 4.4 L31.5 10 L27.5 14.4 L8.7 14.4Z" fill="#7ea8e4" stroke="#5a88c8" stroke-width=".8" stroke-linejoin="round"/>
 <rect x="8.7" y="14.4" width="18.8" height="5.7" fill="#6a84a8"/>
 <rect x="9" y="15" width="18" height="1.8" fill="#b4c8e0"/>
 <rect x="16" y="8" width="4" height="4.4" fill="#f8e080"/>
</svg>
<div class="it" style="top:216px;left:291px">Наблюдение на стая</div>
<!-- grid dots -->
<svg class="abs" style="left:250px;top:246px" width="40" height="40" viewBox="0 0 40 40">
 <g fill="#b4dcbc" stroke="#5e9e72" stroke-width="1">
 <rect x="4" y="8.4" width="5.4" height="5.4" rx="1.3"/><rect x="11.4" y="8.4" width="5.4" height="5.4" rx="1.3"/><rect x="18.9" y="8.4" width="5.4" height="5.4" rx="1.3"/><rect x="26.3" y="8.4" width="5.4" height="5.4" rx="1.3"/>
 <rect x="4" y="15.7" width="5.4" height="5.4" rx="1.3"/><rect x="11.4" y="15.7" width="5.4" height="5.4" rx="1.3"/><rect x="18.9" y="15.7" width="5.4" height="5.4" rx="1.3"/><rect x="26.3" y="15.7" width="5.4" height="5.4" rx="1.3"/>
 <rect x="4" y="23.1" width="5.4" height="5.4" rx="1.3"/><rect x="11.4" y="23.1" width="5.4" height="5.4" rx="1.3"/><rect x="18.9" y="23.1" width="5.4" height="5.4" rx="1.3"/><rect x="26.3" y="23.1" width="5.4" height="5.4" rx="1.3"/>
 </g>
</svg>
<div class="it" style="top:258px;left:291px">Решетка на учебните часове</div>
<!-- footer icon -->
<svg class="abs" style="left:254px;top:479px" width="16" height="16" viewBox="0 0 16 16">
 <rect x=".5" y=".5" width="10" height="8" fill="#8cc09c" stroke="#6aa07c"/>
 <rect x="1.5" y="2.5" width="3.5" height="5" fill="#5e9870"/><rect x="6" y="2.5" width="3.5" height="5" fill="#5e9870"/>
 <rect x="4.5" y="6.5" width="10.5" height="8.5" fill="#b8d4f4" stroke="#90b4e0"/>
 <rect x="6" y="8.5" width="3.5" height="5" fill="#90b4e8"/><rect x="10.5" y="8.5" width="3.5" height="5" fill="#90b4e8"/>
</svg>
<div class="it" style="top:480px;left:283px">Определяне на изгледи</div>
<div class="it" style="top:502px;left:283px">Промяна на текущия изглед</div>

</body></html>
